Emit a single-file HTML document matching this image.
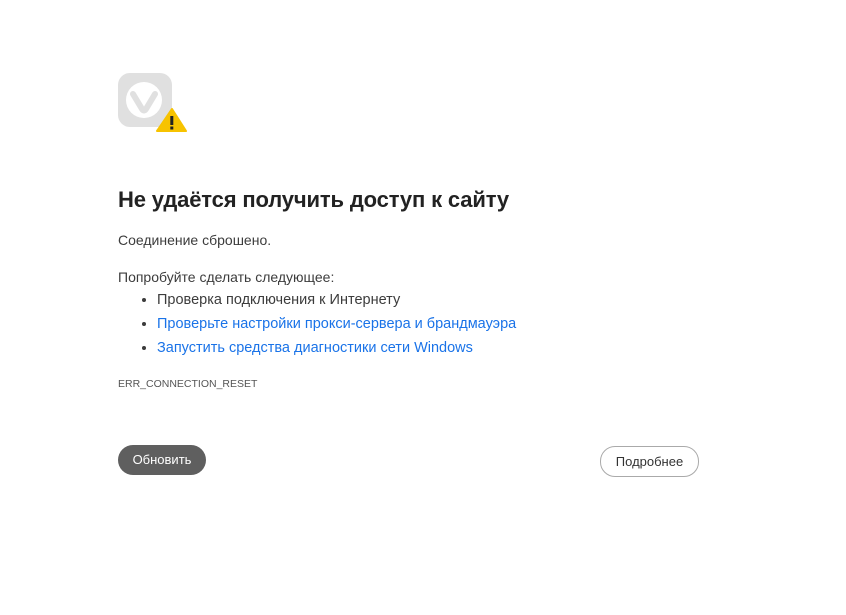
<!DOCTYPE html>
<html><head><meta charset="utf-8"><style>
body{margin:0;width:846px;height:615px;background:#fff;font-family:"Liberation Sans","Noto Sans CJK SC",sans-serif;color:#333;position:relative;overflow:hidden}
.a{position:absolute;white-space:nowrap}
h1{position:absolute;left:118px;top:187px;margin:0;font-size:22px;font-weight:bold;color:#222;letter-spacing:-0.15px;white-space:nowrap}
.t{font-size:14px;color:#3c3c3c}
ul{position:absolute;left:118px;top:288px;margin:0;padding:0 0 0 39px;font-size:14.5px;line-height:24px;color:#3c3c3c;white-space:nowrap}
a{color:#1a73e8;text-decoration:none}
.b1{left:118px;top:445px;width:88px;height:30px;border-radius:15px;background:#5f5f5f;color:#fff;font-size:13px;text-align:center;line-height:30px}
.b2{left:600px;top:446px;width:97px;height:29px;border-radius:15px;border:1px solid #aaa;color:#333;font-size:13px;text-align:center;line-height:29px}
</style></head><body>
<svg class="a" style="left:118px;top:73px" width="70" height="60" viewBox="0 0 70 60">
<rect x="0" y="0" width="54" height="54" rx="12" fill="#e0e0e0"/>
<circle cx="26" cy="27" r="18" fill="#fff"/>
<path d="M15 21 L24 36 Q26 39 28 36 L37 21" stroke="#e0e0e0" stroke-width="6" fill="none" stroke-linecap="round" stroke-linejoin="round"/>
<path d="M54 36 L68 58 L39 58 Z" fill="#f7c300" stroke="#f7c300" stroke-width="2" stroke-linejoin="round"/>
<rect x="52.3" y="43" width="3" height="9" fill="#222"/>
<rect x="52.3" y="53.5" width="3" height="3" fill="#222"/>
</svg>
<h1>Не удаётся получить доступ к сайту</h1>
<div class="a t" style="left:118px;top:232px">Соединение сброшено.</div>
<div class="a t" style="left:118px;top:269px">Попробуйте сделать следующее:</div>
<ul><li>Проверка подключения к Интернету</li><li><a>Проверьте настройки прокси-сервера и брандмауэра</a></li><li><a>Запустить средства диагностики сети Windows</a></li></ul>
<div class="a" style="left:118px;top:378px;font-size:10.5px;color:#555">ERR_CONNECTION_RESET</div>
<div class="a b1">Обновить</div>
<div class="a b2">Подробнее</div>
</body></html>
